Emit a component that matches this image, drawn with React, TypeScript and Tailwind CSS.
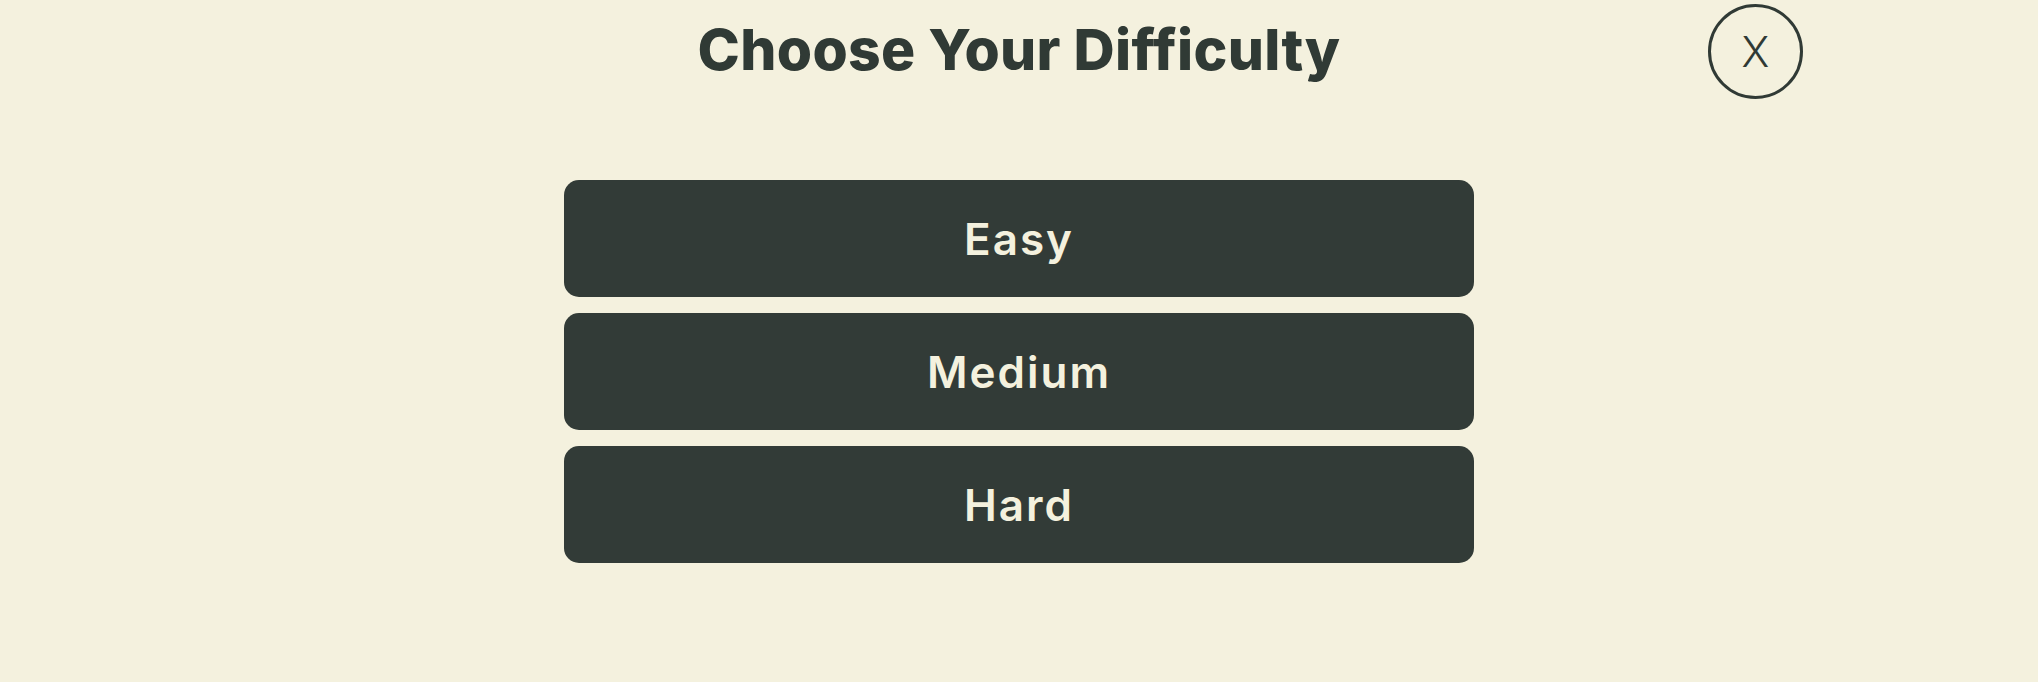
import { useState } from "react";

const levels = ["Easy", "Medium", "Hard"];

export default function App() {
  const [picked, setPicked] = useState<string | null>(null);

  return (
    <div className="min-h-screen w-full bg-[#f4f1de] text-[#303a35] font-['Inter','Noto_Sans',sans-serif]">
      {/* header: title centred, close button on the right */}
      <div className="relative flex justify-center pt-[16px]">
        <h1 className="text-[57px] leading-[68px] font-extrabold tracking-[0.3px] whitespace-nowrap">
          Choose Your Difficulty
        </h1>
        <button
          type="button"
          className="absolute right-[235px] top-[4px] w-[95px] h-[95px] rounded-full border-[3.5px] border-[#303a35] flex items-center justify-center text-[42px] font-light leading-none"
        >
          X
        </button>
      </div>

      {/* options */}
      <div className="mt-[96px] flex flex-col items-center gap-[16px]">
        {levels.map((lvl) => (
          <button
            key={lvl}
            type="button"
            onClick={() => setPicked(lvl)}
            className={
              "w-[910px] h-[117px] rounded-[15px] bg-[#323b37] text-[#f4f1de] text-[44px] font-semibold tracking-[2px] flex items-center justify-center " +
              (picked === lvl ? "ring-4 ring-[#8a9a5b]" : "")
            }
          >
            {lvl}
          </button>
        ))}
      </div>
    </div>
  );
}
